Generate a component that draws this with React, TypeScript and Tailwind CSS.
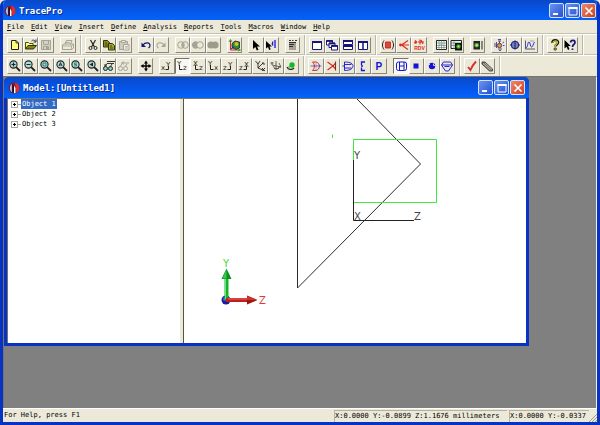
import React from "react";

const K = "#222222";
const G = "#a5a496";
const B = "#1414d8";
const N = "#15157a";
const R = "#dd2a22";

type Tool = { name: string; icon: React.ReactNode; pressed?: boolean; disabled?: boolean };

function Svg({ children }: { children: React.ReactNode }) {
  return (
    <svg viewBox="0 0 14 14" className="h-3.5 w-3.5 shrink-0" fill="none" aria-hidden="true">
      {children}
    </svg>
  );
}

function ToolButton({ tool }: { tool: Tool }) {
  const look = tool.pressed
    ? "border-t-[#77756a] border-l-[#77756a] border-r-white border-b-white bg-[#f8f7f2]"
    : "border-t-white border-l-white border-r-[#8b897c] border-b-[#8b897c] bg-[#ece9d8]";
  return (
    <button
      type="button"
      aria-label={tool.name}
      aria-pressed={tool.pressed}
      disabled={tool.disabled}
      className={"flex h-4 min-w-0 flex-1 items-center justify-center border " + look}
    >
      {tool.icon}
    </button>
  );
}

function Group({ width, tools }: { width: string; tools: Tool[] }) {
  return (
    <div role="group" className={"flex shrink-0 " + width}>
      {tools.map((t) => (
        <ToolButton key={t.name} tool={t} />
      ))}
    </div>
  );
}

function Band({ children }: { children: React.ReactNode }) {
  return (
    <div role="toolbar" className="flex h-5 shrink-0 items-center gap-1.5 border-r border-[#bab7a8] px-1 shadow-[1px_0_0_#ffffff]">
      {children}
    </div>
  );
}

/* Magnifying glass with a mark inside its lens */
function Lens({ children }: { children?: React.ReactNode }) {
  return (
    <Svg>
      <circle cx="5.5" cy="5.5" r="3.6" fill="#a9dede" stroke={K} strokeWidth="1.1" />
      <path d="M8.2 8.2 12 12" stroke={K} strokeWidth="1.8" />
      {children}
    </Svg>
  );
}

/* Pair of axis letters for a view orientation */
function Axes({ a, b, flip }: { a: string; b: string; flip?: boolean }) {
  return (
    <Svg>
      <g fill={K} fontFamily="'DejaVu Sans', sans-serif" fontSize="7">
        <text x={flip ? 2 : 1} y={flip ? 7 : 11}>{a}</text>
        <text x={flip ? 8 : 6} y={flip ? 11 : 8}>{b}</text>
      </g>
      <path d={flip ? "M4.5 6v4.5H7.500" : "M5.500 10.500h3V7"} stroke={K} strokeWidth="1" />
    </Svg>
  );
}

const fileTools: Tool[] = [
  { name: "New", icon: <Svg><path d="M3.500 2.500H8L10.500 5v6.500h-7z" fill="#ffff78" stroke={K} /><path d="M8 2.500V5h2.500" stroke={K} strokeWidth=".8" /></Svg> },
  { name: "Open", icon: <Svg><path d="M1.500 11V4.500h3l1 1h3.500v2" fill="#ffff78" stroke="#4c4c12" /><path d="M1.500 11 4 7.500h8.500L9.500 11z" fill="#84841c" stroke="#33330a" /><path d="M7.500 3c1.500-1.500 3-1 4 .5M12 1.500v2.500H9.500" stroke={K} strokeWidth=".9" /></Svg> },
  { name: "Save", disabled: true, icon: <Svg><path d="M2.500 2.500h9v9h-9z" fill="#d5d2c3" stroke={G} /><path d="M4.500 3v3.500h5V3M4.500 11.500v-3h5v3" stroke={G} /><path d="M7 9h2v2H7z" fill={G} /></Svg> },
];
const printTools: Tool[] = [
  { name: "Print", disabled: true, icon: <Svg><path d="M4 6.500 5.500 2.500H11L9.500 6.500M1.500 7l2-1h9v4l-2 1.500h-9z" stroke={G} /><path d="M1.500 8h9v3.500M10.500 8l2-2M4 4.500h5" stroke={G} strokeWidth=".8" /></Svg> },
];
const clipTools: Tool[] = [
  { name: "Cut", icon: <Svg><path d="M4.500 2 8.500 9M9.500 2 5.500 9" stroke={K} strokeWidth="1.200" /><circle cx="4.500" cy="10" r="1.500" stroke={K} /><circle cx="9.500" cy="10" r="1.500" stroke={K} /></Svg> },
  { name: "Copy", icon: <Svg><path d="M1.500 2.500h4l2 2v4.500h-6z" fill="#8d8d20" stroke="#34340c" /><path d="M6.500 5.500h4l2 2v4.500h-6z" fill="#a3a32a" stroke="#34340c" /><path d="M3 5h2M3 7h3M8 8h2M8 10h3" stroke="#34340c" strokeWidth=".8" /></Svg> },
  { name: "Paste", disabled: true, icon: <Svg><path d="M2.500 3.500h8v8h-8z" fill="#cfccbd" stroke={G} /><path d="M4.500 2.500h4v2h-4z" fill="#ece9d8" stroke={G} /><path d="M6.500 6.500h5.500v5.500H6.500z" fill="#eeecdf" stroke={G} /><path d="M8 8.500h3M8 10h3" stroke={G} strokeWidth=".7" /></Svg> },
];
const undoTools: Tool[] = [
  { name: "Undo", icon: <Svg><path d="M4 7C6 4 11 4 11 7.500c0 1.500-1 2-1.500 2.500" stroke={N} strokeWidth="1.200" /><path d="M2.500 4.500v4.500H7z" fill={N} /></Svg> },
  { name: "Redo", disabled: true, icon: <Svg><path d="M10 7C8 4 3 4 3 7.500 3 9 4 9.500 4.500 10" stroke={G} strokeWidth="1.100" /><path d="M11.500 4.500v4.500H7z" fill={G} /></Svg> },
];
const boolTools: Tool[] = [
  { name: "Intersect", disabled: true, icon: <Svg><circle cx="5" cy="7" r="3.300" stroke={G} /><circle cx="9" cy="7" r="3.300" stroke={G} /><path d="M7 4.500c1.500 1.500 1.500 3.500 0 5-1.500-1.500-1.500-3.500 0-5z" fill={G} /></Svg> },
  { name: "Subtract", disabled: true, icon: <Svg><circle cx="9" cy="7" r="3.300" stroke={G} /><path d="M7 4.300a3.600 3.600 0 1 0 0 5.400c-1.500-1.500-1.500-3.900 0-5.400z" fill={G} /></Svg> },
  { name: "Unite", disabled: true, icon: <Svg><circle cx="5" cy="7" r="3.600" fill="#9d9b8e" /><circle cx="9" cy="7" r="3.600" fill="#9d9b8e" /></Svg> },
];
const renderTools: Tool[] = [
  { name: "Render", icon: <Svg><path d="M2.500 2v10H12" stroke={R} /><path d="M1 4l1.500-2.500L4 4M10 10.500l2.500 1.500L10 13" stroke="#1fae36" /><path d="M4 5.500 7 3l4.500 1v6L8 11.500 4 9.500z" fill="#2b8d35" stroke={K} strokeWidth=".8" /><circle cx="8.500" cy="6" r="2" fill="#d1be2b" /><path d="M3 11l3-2" stroke={B} /></Svg> },
];
const selectTools: Tool[] = [
  { name: "Select", icon: <Svg><path d="M4 2v9l2.300-2 1.500 3.500 1.700-.8L8 8.500h3z" fill="#000" /></Svg> },
  { name: "Select surface", icon: <Svg><path d="M2 3v7.500l2-1.600L5.200 12l1.500-.7L5.500 8.500H8z" fill="#000" /><path d="M9 3.500c-1 1.500-1 2.500 0 4M11 2v8" stroke={B} strokeWidth="1.300" /></Svg> },
];
const applyTools: Tool[] = [
  { name: "Properties", icon: <Svg><path d="M3 4h7v8H3z" fill="#a4a298" /><path d="M3 2.500h2M6 2.500h1.500M9 2.500h2M3 4.500h7M3 6.500h5M3 8.500h4" stroke={K} strokeWidth=".9" /></Svg> },
];
const windowTools: Tool[] = [
  { name: "New window", icon: <Svg><path d="M2.500 3.500h9v8h-9z" fill="#fff" stroke={N} /><path d="M2 4h10" stroke={N} strokeWidth="2" /></Svg> },
  { name: "Cascade", icon: <Svg>{[[1.5, 2.5], [4, 5], [6.5, 7.5]].map(([x, y]) => <g key={x}><path d={`M${x} ${y}h6v4.500h-6z`} fill="#fff" stroke={N} /><path d={`M${x} ${y + 0.5}h6`} stroke={N} strokeWidth="1.800" /></g>)}</Svg> },
  { name: "Tile horizontally", icon: <Svg><path d="M2.500 2.500h9v4h-9zM2.500 7.500h9v4h-9z" fill="#fff" stroke={N} /><path d="M2 3h10M2 8h10" stroke={N} strokeWidth="2" /></Svg> },
  { name: "Tile vertically", icon: <Svg><path d="M2.500 3.500h4.500v8H2.500zM7 3.500h4.500v8H7z" fill="#fff" stroke={N} /><path d="M2 4h10" stroke={N} strokeWidth="2" /></Svg> },
];
const rayTools: Tool[] = [
  { name: "Surface source", icon: <Svg><path d="M4.500 4h5v6h-5z" fill="#f06154" stroke={R} /><path d="M3 2.500c-2 3-2 6 0 9M11 2.500c2 3 2 6 0 9" stroke={K} /><path d="M6 4v6M8 4v6" stroke="#9c211c" strokeWidth=".7" /></Svg> },
  { name: "Grid source", icon: <Svg><path d="M4.500 7 11 2.500M4.500 7H12M4.500 7 11 11.500" stroke={R} strokeWidth="1.100" /><circle cx="3.500" cy="7" r="1.400" fill={R} /></Svg> },
  { name: "File source", icon: <Svg><path d="M3 2.500 5 4.500M8 1.500v5M6 4h6M9 2l2 4" stroke={R} strokeWidth="1.100" /><circle cx="3.500" cy="4.500" r="1.300" fill={R} /><text x="7.500" y="12" textAnchor="middle" fill={R} fontSize="5" fontWeight="700" fontFamily="'Liberation Sans', Arial, sans-serif">RDV</text></Svg> },
];
const mapTools: Tool[] = [
  { name: "Flux table", icon: <Svg><path d="M2.500 2.500h10v9h-10z" fill="#fff" stroke={K} /><path d="M2.500 5h10M2.500 7.500h10M2.500 9.500h10M5 2.500v9M7.500 2.500v9M10 2.500v9" stroke="#64716a" strokeWidth=".6" /><path d="M5 4h4v3H5z" fill="#72cdbb" opacity=".6" /></Svg> },
  { name: "Irradiance table", icon: <Svg><path d="M2 2.500h10.500v8H2z" fill="#e8f3ed" stroke={K} /><path d="M2 5h10M2 7.500h10M5 3v8" stroke="#57705f" strokeWidth=".6" /><path d="M6 5h7v7.500H6z" fill="#111" /><circle cx="9.500" cy="8.500" r="2.200" fill="#2ea34a" /><circle cx="9.500" cy="8.500" r="1" fill="#f1df37" /></Svg> },
];
const irradTools: Tool[] = [
  { name: "Irradiance map", icon: <Svg><path d="M2.500 3h6.500v8.500H2.500z" fill="#222" /><path d="M11 3v8.500" stroke={K} /><circle cx="5.700" cy="7.200" r="2.400" fill="#2aa050" /><circle cx="5.700" cy="7.200" r="1.200" fill="#f1df37" /></Svg> },
];
const plotTools: Tool[] = [
  { name: "Candela plot", icon: <Svg><path d="M6 1.500h3M6 3h3M7.500 3v3M3 5v4M4.500 4v6M6 11h4M7 12.500h2" stroke="#414176" strokeWidth=".9" /><circle cx="7.500" cy="7.500" r="2.200" fill="#ef962f" stroke={N} strokeWidth=".7" /><path d="M10.500 5l1.500-1M11 7.500h1.500" stroke={B} strokeWidth=".8" /></Svg> },
  { name: "Polar plot", icon: <Svg><circle cx="7" cy="7" r="3.800" fill="#c6d7df" stroke={N} /><path d="M2 7h10M7 2.500v9M4 5h6M4 9h6" stroke={N} strokeWidth=".9" /></Svg> },
  { name: "Distribution plot", icon: <Svg><path d="M2.500 2.500v8.500H12" stroke="#56566f" /><path d="M3 10c2-1 1.500-6 3-6s1 5 2.500 5 1.500-3 3-5" stroke={B} strokeWidth=".9" /><path d="M7 3h4" stroke={G} /></Svg> },
];
const helpTools: Tool[] = [
  { name: "About", icon: <Svg><path d="M4.500 5c0-3.500 5.500-3.500 5.500-.5 0 2-2.500 2-2.500 4" stroke="#1b1b08" strokeWidth="2.600" /><path d="M4.700 5c.5-2.800 4.800-2.500 4.800-.5 0 1.500-2.300 2-2.300 4" stroke="#d4cb25" strokeWidth="1.200" /><circle cx="7.200" cy="11" r="1.200" fill="#d4cb25" stroke="#1b1b08" strokeWidth=".8" /></Svg> },
  { name: "Context help", icon: <Svg><path d="M1.500 2v8.500l2-1.700L5 12l1.500-.7L5.200 8h2.600z" fill="#000" /><path d="M7.500 4.500c.5-3 4.500-2.500 4.500 0C12 6.500 9.500 6 9.500 9M9.500 10.500V12" stroke={N} strokeWidth="1.700" /></Svg> },
];

const zoomTools: Tool[] = [
  { name: "Zoom in", icon: <Lens><path d="M3.500 5.500h4M5.500 3.500v4" stroke={K} strokeWidth="1.200" /></Lens> },
  { name: "Zoom out", icon: <Lens><path d="M3.500 5.500h4" stroke={K} strokeWidth="1.200" /></Lens> },
  { name: "Zoom window", icon: <Lens><path d="M4 4h3v3H4z" stroke="#277575" strokeWidth=".9" /></Lens> },
  { name: "Zoom all", icon: <Lens><path d="M4 7l1.500-3.500L7 7M4.500 6h2" stroke={K} strokeWidth=".9" /></Lens> },
  { name: "Zoom selection", icon: <Lens><path d="M7 4H4.500v1.500h2V7H4" stroke="#277575" strokeWidth=".9" /></Lens> },
  { name: "Previous zoom", icon: <Lens><path d="M7 3.500v4L3.500 5.500z" fill={K} /></Lens> },
  { name: "Named view", icon: <Svg><path d="M5 2.500h8M5 4.500h7M2.500 8 5 4.500M2 6h3M8 8l2-3" stroke={K} strokeWidth=".9" /><circle cx="3.500" cy="9.500" r="2" fill="#83cfcf" stroke={K} /><circle cx="8.500" cy="9.500" r="2" fill="#83cfcf" stroke={K} /></Svg> },
  { name: "Reset view", disabled: true, icon: <Svg><path d="M4 4h8M7 2.500 5 4l2 1.500M2.500 8 5 5M8 8l2-3" stroke={G} /><circle cx="3.500" cy="9.500" r="2" stroke={G} /><circle cx="8.500" cy="9.500" r="2" stroke={G} /></Svg> },
];
const panTools: Tool[] = [
  { name: "Pan", icon: <Svg><path d="M7 3v8M3 7h8" stroke="#000" strokeWidth="1.400" /><path d="M7 1.500 9 4.500H5zM7 12.500l2-3H5zM1.500 7l3-2v4zM12.500 7l-3-2v4z" fill="#000" /></Svg> },
];
const viewTools: Tool[] = [
  { name: "View XY", icon: <Axes a="x" b="Y" /> },
  { name: "View YZ", pressed: true, icon: <Axes a="Y" b="z" flip /> },
  { name: "View XZ", icon: <Axes a="X" b="z" flip /> },
  { name: "View YX", icon: <Axes a="Y" b="x" flip /> },
  { name: "View ZY", icon: <Axes a="z" b="Y" /> },
  { name: "View ZX", icon: <Axes a="z" b="X" /> },
  { name: "Isometric view", icon: <Svg><path d="M2.500 2 5 5l2-3M5 5v4l6 2.500M5 9l5-5M9 4h2v2M9 9l3 3M12 9l-3 3" stroke={K} strokeWidth=".9" /></Svg> },
  { name: "Rotate view", icon: <Svg><path d="M1.500 4h3M3 3v3l9 2M7 2v9M4.500 7c1 4 5 4 6 0M10 4l2 4h-3M5 9.500h5" stroke="#56554d" strokeWidth=".9" /></Svg> },
  { name: "Render view", icon: <Svg><circle cx="8" cy="6" r="2.700" fill="#13b825" /><path d="M3 8c1 3 5 3 7 1" stroke={K} strokeWidth="1.100" /><path d="M5 7v3" stroke="#2da237" /></Svg> },
];
const insertTools: Tool[] = [
  { name: "Lens element", icon: <Svg><path d="M3.500 3c2.500 2 2.500 6 0 8.500M3.500 3H7M3.500 11.500H7" stroke={R} /><path d="M7 3c4.500 1 4.500 7.500 0 8.500" stroke="#8c3160" /><path d="M7 3v8.500" stroke="#c98a9c" strokeWidth=".7" /><path d="M1.500 7h11" stroke={B} strokeWidth=".6" /></Svg> },
  { name: "Fresnel lens", icon: <Svg><path d="M2.500 3 8 7l-5.500 4" stroke={R} strokeWidth="1.200" /><path d="M10.500 2.500v9M10.500 4 8 7l2.500 3" stroke="#9c2323" strokeWidth="1.100" /></Svg> },
  { name: "Reflector", icon: <Svg><path d="M3.500 3v8.500C10 11.500 12 9 12 7s-2-4-8.500-4zM3.500 5.500h7M3.500 9h7M1.500 7h2" stroke={B} strokeWidth=".9" /></Svg> },
  { name: "Baffle", icon: <Svg><path d="M9 3H5.500v3M5.500 8.500v3H9M5 7h2" stroke={B} strokeWidth="1.300" /></Svg> },
  { name: "Primitive", icon: <Svg><text x="3.500" y="11" fill={B} fontSize="10" fontWeight="700" fontFamily="'Liberation Sans', Arial, sans-serif">P</text></Svg> },
];
const shapeTools: Tool[] = [
  { name: "Cylinder", pressed: true, icon: <Svg><rect x="2.500" y="3" width="10" height="8.500" rx="2" stroke={B} /><path d="M5.500 3v8.500M10 3v8.500M5.500 7h4.500" stroke={B} /></Svg> },
  { name: "Block", icon: <Svg><path d="M4.500 4.500h5v5h-5z" fill={B} /></Svg> },
  { name: "Sphere", icon: <Svg><circle cx="7" cy="7" r="3.200" fill={B} /><path d="M3.500 6.500l1.500-1.500M8.500 4.500v2h1.500" stroke="#d9e0ff" strokeWidth=".9" /></Svg> },
  { name: "Cone", icon: <Svg><path d="M1.500 6 3.500 3h7l2 3-4 6h-3zM1.500 6h11M4.500 7.500h5" stroke={B} strokeWidth=".9" /></Svg> },
];
const checkTools: Tool[] = [
  { name: "Apply", icon: <Svg><path d="M3 8l2.500 3C7 7.500 8 5.500 11 2.500" stroke={R} strokeWidth="1.800" /></Svg> },
  { name: "Edit", icon: <Svg><path d="M2 3h3l7.500 7v2h-3L2 5z" fill="#77756c" stroke="#42413c" strokeWidth=".9" /><path d="M3 4.500 10.500 11M5 4l7 6.500" stroke="#d6d2bf" strokeWidth=".7" /></Svg> },
];

const menus = ["File", "Edit", "View", "Insert", "Define", "Analysis", "Reports", "Tools", "Macros", "Window", "Help"];
const objects = ["Object 1", "Object 2", "Object 3"];

function Logo() {
  return (
    <svg viewBox="0 0 12 12" className="h-3 w-3 shrink-0" aria-hidden="true">
      <circle cx="6" cy="6" r="5.300" fill="#8b1428" />
      <path d="M7 .8a5.300 5.300 0 0 1 1.500 9.900z" fill="#e32c2c" />
      <path d="M3.800 2c-2.800 2-2.300 6.500.2 8.300z" fill="#b4c2ea" />
      <path d="M6 3.500 7.500 6v5H6z" fill="#fff" />
      <path d="M4.300 2v8.500L6 11V4z" fill="#171325" />
    </svg>
  );
}

function WindowButtons() {
  const base = "flex h-[15px] w-[15px] items-center justify-center rounded-[2px] border border-[#d5e0fa] text-white ";
  const blue = base + "bg-linear-to-br from-[#6a94f2] to-[#2350ce]";
  return (
    <div className="flex gap-px">
      <button type="button" aria-label="Minimize" className={blue}>
        <Svg><path d="M3 10h5" stroke="#fff" strokeWidth="2" /></Svg>
      </button>
      <button type="button" aria-label="Maximize" className={blue}>
        <Svg><path d="M3 3.500h8v7.500H3z" stroke="#fff" /><path d="M2.500 4h9" stroke="#fff" strokeWidth="2" /></Svg>
      </button>
      <button type="button" aria-label="Close" className={base + "bg-linear-to-br from-[#ee8868] to-[#cf3c17]"}>
        <Svg><path d="m3.500 3.500 7 7m0-7-7 7" stroke="#fff" strokeWidth="1.600" /></Svg>
      </button>
    </div>
  );
}

function TitleBar({ title, height }: { title: string; height: string }) {
  return (
    <header
      className={
        "flex shrink-0 items-center gap-[3px] bg-linear-to-b from-[#0a48c8] via-[#0555e6] to-[#0463fb] " + height
      }
    >
      <Logo />
      <h1 className="flex-1 text-[9px] leading-3 font-bold text-white [text-shadow:1px_1px_0_#0b2a86]">{title}</h1>
      <WindowButtons />
    </header>
  );
}

function Arrows() {
  return (
    <g>
      <circle cx="226" cy="300" r="4.500" fill="#1e1e9c" />
      <circle cx="225" cy="299" r="2" fill="#5757d8" />
      <path d="M224.500 277h4v23h-4z" fill="#12b42a" />
      <path d="M225.500 277v22" stroke="#70e27c" />
      <path d="M226.500 268.500 231.500 279h-10z" fill="#0c8e22" />
      <path d="M226.500 269v9.500h-4z" fill="#35c94a" />
      <path d="M226 298h22v4h-22z" fill="#bf1f1c" />
      <path d="M228 299h20" stroke="#ee6960" />
      <path d="M257.500 300 247 304.500v-9z" fill="#9d1411" />
      <path d="M257 300h-10v-4z" fill="#cf3329" />
    </g>
  );
}

function Model() {
  return (
    <svg viewBox="184 99 342 244" width="342" height="244" fill="none" role="img" aria-label="Model view" className="block">
      <path d="M297.500 99v189L420.500 164 357 99" stroke="#2c2c2c" />
      <path d="M353.500 139.500h83v63h-83z" stroke="#3fe93f" />
      <path d="M332.500 134.500v3.500" stroke="#3fe93f" />
      <path d="M353.500 160v60.500H414" stroke="#222222" />
      <g fontFamily="'DejaVu Sans', sans-serif" fontSize="10" fill="#444444">
        <text x="354" y="159">Y</text>
        <text x="354" y="220">X</text>
        <text x="414" y="220">Z</text>
      </g>
      <Arrows />
      <g fontFamily="'DejaVu Sans', sans-serif">
        <text x="223" y="267" fontSize="10" fill="#45dc45">Y</text>
        <text x="259" y="304" fontSize="10" fill="#e23a3a">Z</text>
      </g>
    </svg>
  );
}

function ModelWindow() {
  return (
    <section className="absolute top-0 left-0 flex h-[269px] w-[525px] flex-col rounded-t-[5px] border-x-[3px] border-b-[3px] border-[#0733c4] bg-[#0733c4]">
      <TitleBar title="Model:[Untitled1]" height="h-[21px] -mx-[3px] rounded-t-[5px] pl-1 pr-1" />
      <div className="flex min-h-0 flex-1 border-t border-l border-[#77756a] bg-white">
        <ul role="tree" className="w-[172px] shrink-0 pl-[3px] text-[7px] leading-[10px]">
          {objects.map((name, i) => (
            <li key={name} role="treeitem" className="flex items-center">
              <button
                type="button"
                aria-label={"Expand " + name}
                className="flex h-[7px] w-[7px] items-center justify-center border border-[#a9a79c]"
              >
                <svg viewBox="0 0 5 5" className="h-[5px] w-[5px] shrink-0" aria-hidden="true">
                  <path d="M1 2.500h3M2.500 1v3" stroke="#000" />
                </svg>
              </button>
              <span className="mr-px w-[2px] border-t border-dotted border-[#a9a79c]" />
              <span className={i === 0 ? "bg-[#316ac5] px-px text-white" : "px-px"}>{name}</span>
            </li>
          ))}
        </ul>
        <div className="w-1 shrink-0 border-r border-[#55534a] bg-[#ece9d8]" />
        <div className="min-w-0 flex-1 overflow-hidden">
          <Model />
        </div>
      </div>
    </section>
  );
}

export default function App() {
  return (
    <div className="flex min-h-screen flex-col overflow-hidden bg-[#ece9d8] font-['DejaVu_Sans_Mono',monospace] text-black">
      <div className="flex flex-1 flex-col overflow-hidden rounded-t-[6px] border-x-[3px] border-b-[3px] border-[#0733c4] bg-[#ece9d8]">
        <TitleBar title="TracePro" height="h-5 -mx-[3px] pt-px pl-1 pr-1" />
        <nav className="flex h-[14px] shrink-0 items-center gap-[7px] border-b border-[#c5c2b3] pl-1 text-[7px] leading-3">
          {menus.map((m) => (
            <button key={m} type="button">
              <span className="underline">{m[0]}</span>
              {m.slice(1)}
            </button>
          ))}
        </nav>
        <div className="flex h-[21px] shrink-0 items-center border-t border-b border-t-white border-b-[#c5c2b3]">
          <Band>
            <Group width="w-[47px]" tools={fileTools} />
            <Group width="w-4" tools={printTools} />
          </Band>
          <Band>
            <Group width="w-[47px]" tools={clipTools} />
            <Group width="w-[31px]" tools={undoTools} />
            <Group width="w-[46px]" tools={boolTools} />
            <Group width="w-[15px]" tools={renderTools} />
            <Group width="w-[31px]" tools={selectTools} />
            <Group width="w-[15px]" tools={applyTools} />
          </Band>
          <Band>
            <Group width="w-[62px]" tools={windowTools} />
          </Band>
          <Band>
            <Group width="w-[47px]" tools={rayTools} />
            <Group width="w-[31px]" tools={mapTools} />
            <Group width="w-[15px]" tools={irradTools} />
            <Group width="w-[47px]" tools={plotTools} />
          </Band>
          <Band>
            <Group width="w-[31px]" tools={helpTools} />
          </Band>
        </div>
        <div className="flex h-[21px] shrink-0 items-center border-t border-white">
          <Band>
            <Group width="w-[125px]" tools={zoomTools} />
            <Group width="w-[15px]" tools={panTools} />
            <Group width="w-[140px]" tools={viewTools} />
          </Band>
          <Band>
            <Group width="w-[79px]" tools={insertTools} />
            <Group width="w-[62px]" tools={shapeTools} />
          </Band>
          <Band>
            <Group width="w-[31px]" tools={checkTools} />
          </Band>
        </div>
        <main className="relative flex-1 overflow-hidden border-t border-l border-r border-t-[#77756a] border-r-[#f4f2e8] border-l-[#77756a] bg-[#808080]">
          <ModelWindow />
        </main>
        <footer className="flex h-[14px] shrink-0 items-center border-t border-white text-[7px] leading-[11px]">
          <span className="flex-1 pl-px">For Help, press F1</span>
          <span className="mr-0.5 w-[173px] border-t border-l border-[#b5b2a3] whitespace-nowrap">
            X:0.0000 Y:-0.0899 Z:1.1676 millimeters
          </span>
          <span className="w-20 border-t border-l border-[#b5b2a3] whitespace-nowrap">X:0.0000 Y:-0.0337</span>
          <svg viewBox="0 0 8 8" className="h-2 w-2 shrink-0 self-end" aria-hidden="true">
            <path d="M0 8 8 0M3 8l5-5M6 8l2-2" stroke="#a29f90" />
          </svg>
        </footer>
      </div>
    </div>
  );
}
